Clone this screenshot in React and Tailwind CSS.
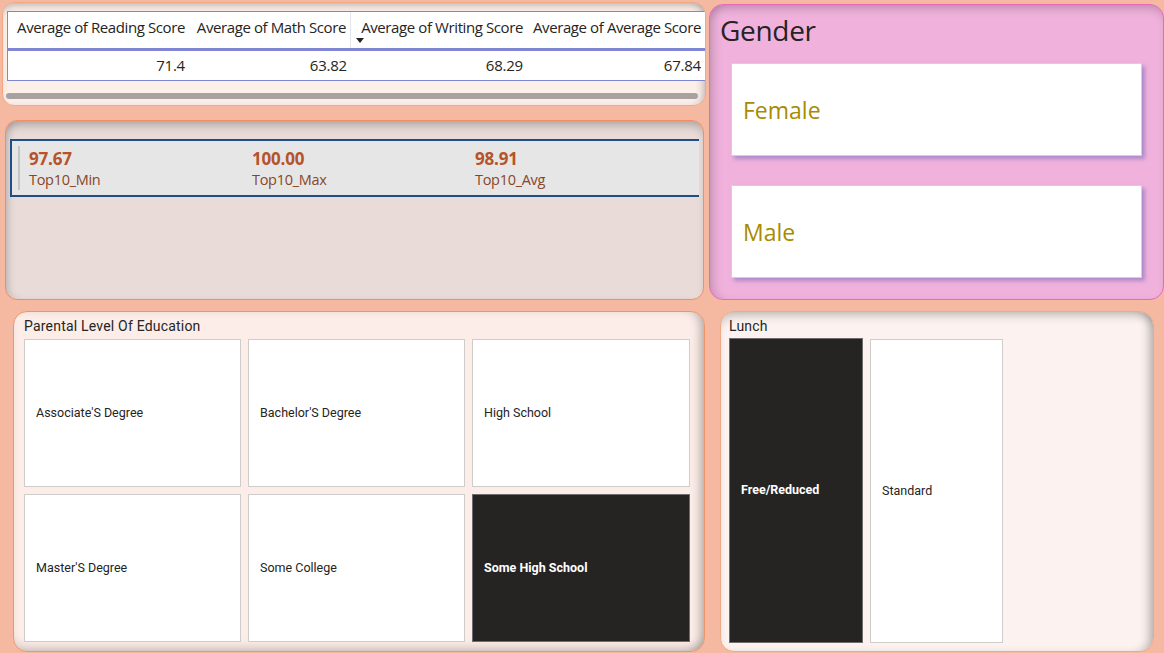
const EDU = [
  { label: "Associate'S Degree" },
  { label: "Bachelor'S Degree" },
  { label: "High School" },
  { label: "Master'S Degree" },
  { label: "Some College" },
  { label: "Some High School", selected: true },
];

const COLS = [
  { name: "Average of Reading Score", value: "71.4", w: "w-[181px]" },
  { name: "Average of Math Score", value: "63.82", w: "w-[162px]" },
  { name: "Average of Writing Score", value: "68.29", w: "w-[176px]", sorted: true },
  { name: "Average of Average Score", value: "67.84", w: "w-[178px]" },
];

const KPIS = [
  { value: "97.67", label: "Top10_Min" },
  { value: "100.00", label: "Top10_Max" },
  { value: "98.91", label: "Top10_Avg" },
];

function ScoreTable() {
  return (
    <div className="ml-[2px] mt-[2px] w-[704px] h-[104px] rounded-[12px] border border-[#f0a885] bg-[#fcefea] shadow-[inset_0_6px_8px_-4px_rgba(0,0,0,0.25),inset_-6px_0_8px_-4px_rgba(0,0,0,0.2)] overflow-hidden">
      <div className="mt-[8px] ml-[4px] w-[698px] border-l border-[#8088d0] bg-white text-[15px] text-[#252423] font-['Open_Sans',sans-serif]">
        <div className="flex h-[40px] border-t-[1.5px] border-[#7e86d4] border-b-[3px]">
          {COLS.map((c, i) => (
            <div
              key={c.name}
              className={`${c.w} relative flex items-start justify-end pr-[4px] leading-[20px] pt-[5px] tracking-[-0.4px] whitespace-nowrap ${i === 1 ? "border-r border-[#e5e5ee]" : ""}`}
            >
              {c.name}
              {c.sorted && (
                <span className="absolute left-[5px] top-[26px] w-0 h-0 border-l-[4px] border-r-[4px] border-t-[5px] border-l-transparent border-r-transparent border-t-[#252423]" />
              )}
            </div>
          ))}
        </div>
        <div className="flex h-[30px] border-b-[1.5px] border-[#7e86d4] tracking-[-0.2px]">
          {COLS.map((c) => (
            <div key={c.name} className={`${c.w} flex items-center justify-end pr-[4px]`}>
              {c.value}
            </div>
          ))}
        </div>
      </div>
      <div className="mt-[12px] ml-[3px] w-[692px] h-[6px] rounded-full bg-[#a8a19f]" />
    </div>
  );
}

function KpiPanel() {
  return (
    <div className="ml-[5px] mt-[14px] w-[699px] h-[180px] rounded-[12px] border border-[#f08f66] bg-[#e8dbd8] shadow-[inset_0_8px_10px_-4px_rgba(0,0,0,0.25),inset_6px_0_8px_-4px_rgba(0,0,0,0.15)] pt-[18px] pl-[4px]">
      <div className="flex w-[689px] h-[58px] border-y-[2px] border-l-[2px] border-[#1f4e87] bg-[#e6e6e6] pl-[6px] py-[5px] font-['Open_Sans',sans-serif]">
        <div className="flex w-full border-l-2 border-[#c6c6c6] pl-[9px]">
          {KPIS.map((k) => (
            <div key={k.label} className="w-[223px] flex flex-col pt-[3px]">
              <span className="text-[17px] leading-[20px] font-bold text-[#b5532b] tracking-[-0.2px]">{k.value}</span>
              <span className="text-[14.5px] leading-[18px] mt-[2px] text-[#86462a] tracking-[-0.3px]">{k.label}</span>
            </div>
          ))}
        </div>
      </div>
    </div>
  );
}

function GenderPanel() {
  return (
    <div className="ml-[3px] mt-[4px] w-[455px] h-[296px] rounded-[14px] border border-[#ea67bb] bg-[#f0b2dc] shadow-[inset_0_8px_10px_-4px_rgba(0,0,0,0.18),inset_8px_0_10px_-4px_rgba(0,0,0,0.15)] font-['Open_Sans',sans-serif]">
      <div className="pl-[10px] pt-[11px] text-[28px] leading-none text-[#252423] tracking-[-0.3px]">Gender</div>
      <div className="flex flex-col gap-[29px] mt-[19px] ml-[21px]">
        {["Female", "Male"].map((g) => (
          <div
            key={g}
            className="w-[411px] h-[93px] bg-white border border-[#d4d0d6] shadow-[3px_3px_4px_rgba(130,110,190,0.6)] flex items-center pl-[11px] pt-[1px] text-[23px] text-[#a88b00]"
          >
            {g}
          </div>
        ))}
      </div>
    </div>
  );
}

function EduPanel() {
  return (
    <div className="ml-[13px] w-[692px] h-[341px] rounded-[14px] border border-[#f0946a] bg-[#fcede8] shadow-[inset_-8px_0_10px_-4px_rgba(0,0,0,0.25),inset_0_-8px_10px_-4px_rgba(0,0,0,0.15)] pl-[10px] pt-[5px] font-['Roboto',sans-serif]">
      <div className="text-[14px] leading-[18px] text-[#252423] tracking-[0.2px]">Parental Level Of Education</div>
      <div className="grid grid-cols-[217px_217px_218px] gap-x-[7px] gap-y-[7px] mt-[4px]">
        {EDU.map((e) => (
          <div
            key={e.label}
            className={`h-[148px] flex items-center pl-[11px] text-[12.5px] ${
              e.selected
                ? "bg-[#252423] border border-[#6d6d6d] text-white font-bold"
                : "bg-white border border-[#cfcccc] text-[#252423]"
            }`}
          >
            {e.label}
          </div>
        ))}
      </div>
    </div>
  );
}

function LunchPanel() {
  return (
    <div className="ml-[15px] w-[434px] h-[341px] rounded-[14px] border border-[#f0a888] bg-[#fcf3f0] shadow-[inset_0_8px_10px_-4px_rgba(0,0,0,0.2),inset_-8px_0_10px_-4px_rgba(0,0,0,0.25)] pl-[8px] pt-[5px] font-['Roboto',sans-serif]">
      <div className="text-[14px] leading-[18px] text-[#252423] tracking-[0.2px]">Lunch</div>
      <div className="flex gap-[7px] mt-[3px]">
        <div className="w-[134px] h-[305px] bg-[#252423] border border-[#6d6d6d] flex items-center pl-[11px] text-[12.5px] text-white font-bold">
          Free/Reduced
        </div>
        <div className="w-[133px] h-[304px] mt-[1px] bg-white border border-[#cfcccc] flex items-center pl-[11px] text-[12.5px] text-[#252423]">
          Standard
        </div>
      </div>
    </div>
  );
}

export default function App() {
  return (
    <div className="w-[1164px] h-[653px] overflow-hidden bg-[#f5b8a0]">
      <div className="flex h-[311px]">
        <div className="flex flex-col">
          <ScoreTable />
          <KpiPanel />
        </div>
        <GenderPanel />
      </div>
      <div className="flex">
        <EduPanel />
        <LunchPanel />
      </div>
    </div>
  );
}
